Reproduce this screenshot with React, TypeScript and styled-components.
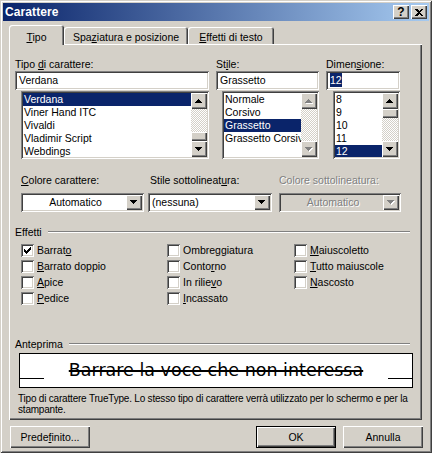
import styled, { createGlobalStyle, css } from 'styled-components';

const FACE = '#d4d0c8';
const NAVY = '#0a246a';

const raised = css`
  box-shadow: inset 1px 1px #fff, inset -1px -1px #404040, inset -2px -2px #808080;
`;

const sunken = css`
  box-shadow: inset 1px 1px #808080, inset -1px -1px #fff, inset 2px 2px #404040,
    inset -2px -2px ${FACE};
`;

const GlobalStyle = createGlobalStyle`
  html, body {
    margin: 0;
    padding: 0;
    background: ${FACE};
  }
  body {
    font-family: "Liberation Sans", Arial, sans-serif;
    font-size: 10.5px;
    color: #000;
  }
  * {
    box-sizing: border-box;
  }
`;

const fonts = ['Verdana', 'Viner Hand ITC', 'Vivaldi', 'Vladimir Script', 'Webdings'];
const styles = ['Normale', 'Corsivo', 'Grassetto', 'Grassetto Corsivo'];
const sizes = ['8', '9', '10', '11', '12'];

// label text, index of the access-key letter, checked
const effects: [string, number, boolean?][] = [
  ['Barrato', 6, true],
  ['Barrato doppio', 0],
  ['Apice', 0],
  ['Pedice', 0],
  ['Ombreggiatura', 5],
  ['Contorno', 5],
  ['In rilievo', 8],
  ['Incassato', 0],
  ['Maiuscoletto', 0],
  ['Tutto maiuscole', 0],
  ['Nascosto', 0],
];

const Arrow = ({ up, disabled }: { up?: boolean; disabled?: boolean }) => {
  const rows = up ? [1, 3, 5, 7] : [7, 5, 3, 1];
  const draw = (d: number, color: string) =>
    rows.map((w, i) => (
      <rect key={`${d}-${i}`} x={(7 - w) / 2 + d} y={i + d} width={w} height={1} fill={color} />
    ));
  return (
    <svg width={8} height={5} shapeRendering="crispEdges">
      {disabled && draw(1, '#fff')}
      {draw(0, disabled ? '#808080' : '#000')}
    </svg>
  );
};

// 7x7 pixel check mark
const checkPixels: [number, number, number][] = [
  [6, 0, 1],
  [5, 1, 2],
  [0, 2, 1],
  [4, 2, 3],
  [0, 3, 2],
  [3, 3, 3],
  [0, 4, 5],
  [1, 5, 3],
  [2, 6, 1],
];

const CheckMark = () => (
  <svg width={7} height={7} shapeRendering="crispEdges">
    {checkPixels.map(([x, y, w], i) => (
      <rect key={i} x={x} y={y} width={w} height={1} fill="#000" />
    ))}
  </svg>
);

const CloseGlyph = () => (
  <svg width={8} height={7} shapeRendering="crispEdges">
    <path d="M0 0h2l2 2 2-2h2L5 3.5 8 7H6L4 5 2 7H0l3-3.5z" fill="#000" />
  </svg>
);

const Scroll = ({ thumb, disabled }: { thumb?: number; disabled?: boolean }) => (
  <ScrollBar>
    <ScrollButton>
      <Arrow up disabled={disabled} />
    </ScrollButton>
    <Track>{thumb !== undefined && <Thumb style={{ marginTop: thumb }} />}</Track>
    <ScrollButton>
      <Arrow disabled={disabled} />
    </ScrollButton>
  </ScrollBar>
);

const Accel = ({ text, at }: { text: string; at: number }) => (
  <span>
    {text.slice(0, at)}
    <U>{text[at]}</U>
    {text.slice(at + 1)}
  </span>
);

const App = () => {
  return (
    <>
      <GlobalStyle />
      <Window>
        <TitleBar>
          <TitleText>Carattere</TitleText>
          <TitleButton $first>?</TitleButton>
          <TitleButton>
            <CloseGlyph />
          </TitleButton>
        </TitleBar>

        <Body>
          <TabStrip>
            <Tab $active $w={55}>
              <Accel text="Tipo" at={0} />
            </Tab>
            <Tab $w={124}>
              <Accel text="Spaziatura e posizione" at={3} />
            </Tab>
            <Tab $w={86}>
              <Accel text="Effetti di testo" at={0} />
            </Tab>
          </TabStrip>

          <Panel>
            <FontGrid>
              <Field>
                <Label>
                  <Accel text="Tipo di carattere:" at={5} />
                </Label>
                <TextBox>Verdana</TextBox>
                <ListBox $indent={6}>
                  <ListItems>
                    {fonts.map((f, i) => (
                      <ListRow key={f} $selected={i === 0}>
                        {f}
                      </ListRow>
                    ))}
                  </ListItems>
                  <Scroll thumb={23} />
                </ListBox>
              </Field>
              <Field>
                <Label>
                  <Accel text="Stile:" at={2} />
                </Label>
                <TextBox>Grassetto</TextBox>
                <ListBox $indent={6}>
                  <ListItems>
                    {styles.map((s, i) => (
                      <ListRow key={s} $selected={i === 2}>
                        {s}
                      </ListRow>
                    ))}
                  </ListItems>
                  <Scroll disabled />
                </ListBox>
              </Field>
              <Field>
                <Label>
                  <Accel text="Dimensione:" at={5} />
                </Label>
                <TextBox>
                  <Selection>12</Selection>
                </TextBox>
                <ListBox $indent={7}>
                  <ListItems>
                    {sizes.map((s, i) => (
                      <ListRow key={s} $selected={i === 4}>
                        {s}
                      </ListRow>
                    ))}
                  </ListItems>
                  <Scroll thumb={0} />
                </ListBox>
              </Field>
            </FontGrid>

            <ColorGrid>
              <Field>
                <Label>
                  <Accel text="Colore carattere:" at={0} />
                </Label>
                <ComboBox $w={123}>
                  <ComboText $center>Automatico</ComboText>
                  <DropButton>
                    <Arrow />
                  </DropButton>
                </ComboBox>
              </Field>
              <Field>
                <Label $shift={2}>
                  <Accel text="Stile sottolineatura:" at={17} />
                </Label>
                <ComboBox $w={124}>
                  <ComboText>(nessuna)</ComboText>
                  <DropButton>
                    <Arrow />
                  </DropButton>
                </ComboBox>
              </Field>
              <Field>
                <Label $disabled>Colore sottolineatura:</Label>
                <ComboBox $w={122} $disabled>
                  <ComboText $center $disabled>
                    Automatico
                  </ComboText>
                  <DropButton>
                    <Arrow disabled />
                  </DropButton>
                </ComboBox>
              </Field>
            </ColorGrid>

            <GroupHeader $top={14}>
              <span>Effetti</span>
              <GroupLine />
            </GroupHeader>
            <CheckGrid>
              {effects.map(([text, at, checked]) => (
                <CheckItem key={text}>
                  <CheckBox>{checked && <CheckMark />}</CheckBox>
                  <Accel text={text} at={at} />
                </CheckItem>
              ))}
            </CheckGrid>

            <GroupHeader $top={32}>
              <span>Anteprima</span>
              <GroupLine />
            </GroupHeader>
            <Preview>
              <PreviewRule />
              <PreviewText>Barrare la voce che non interessa</PreviewText>
              <PreviewRule />
            </Preview>
            <Description>
              Tipo di carattere TrueType. Lo stesso tipo di carattere verrà utilizzato per lo
              schermo e per la stampante.
            </Description>
          </Panel>

          <ButtonRow>
            <PushButton>
              <Accel text="Predefinito..." at={5} />
            </PushButton>
            <Spacer />
            <PushButton $default>OK</PushButton>
            <PushButton>Annulla</PushButton>
          </ButtonRow>
        </Body>
      </Window>
    </>
  );
};

export default App;

// Styled components

const U = styled.span`
  text-decoration: underline;
  text-underline-offset: 1px;
`;

const Window = styled.div`
  width: 432px;
  height: 453px;
  padding: 3px;
  display: flex;
  flex-direction: column;
  background: ${FACE};
  box-shadow: inset 1px 1px ${FACE}, inset -1px -1px #404040, inset 2px 2px #fff,
    inset -2px -2px #808080;
`;

const TitleBar = styled.div`
  height: 18px;
  display: flex;
  align-items: center;
  padding: 0 2px;
  background: linear-gradient(to right, ${NAVY}, #a6caf0);
  color: #fff;
`;

const TitleText = styled.div`
  font-weight: bold;
  font-size: 12px;
  letter-spacing: 0.1px;
`;

const TitleButton = styled.div<{ $first?: boolean }>`
  width: 16px;
  height: 14px;
  margin-left: ${({ $first }) => ($first ? 'auto' : '2px')};
  display: flex;
  align-items: center;
  justify-content: center;
  background: ${FACE};
  color: #000;
  font-weight: bold;
  font-size: 12px;
  line-height: 14px;
  ${raised}
`;

const Body = styled.div`
  display: flex;
  flex-direction: column;
  padding: 0 7px 0 6px;
`;

const TabStrip = styled.div`
  display: flex;
  align-items: flex-end;
  height: 19px;
  margin-top: 4px;
`;

const Tab = styled.div<{ $active?: boolean; $w: number }>`
  position: relative;
  z-index: ${({ $active }) => ($active ? 1 : 0)};
  width: ${({ $w }) => $w}px;
  height: ${({ $active }) => ($active ? 20 : 17)}px;
  margin-bottom: ${({ $active }) => ($active ? -1 : 0)}px;
  padding-top: ${({ $active }) => ($active ? 6 : 4)}px;
  text-align: center;
  line-height: 12px;
  white-space: nowrap;
  background: ${FACE};
  border-radius: 3px 3px 0 0;
  box-shadow: inset 1px 1px #fff, inset -1px 0 #404040, inset -2px 0 #808080;
`;

const Panel = styled.div`
  height: 376px;
  padding: 14px 12px 0 6px;
  display: flex;
  flex-direction: column;
  box-shadow: inset 1px 1px #fff, inset -1px -1px #404040, inset -2px -2px #808080;
`;

const FontGrid = styled.div`
  display: grid;
  grid-template-columns: 194px 103px 74px;
  column-gap: 7px;
`;

const Field = styled.div`
  display: flex;
  flex-direction: column;
`;

const Label = styled.div<{ $disabled?: boolean; $shift?: number }>`
  height: 12px;
  line-height: 12px;
  margin-bottom: 1px;
  margin-left: ${({ $shift }) => $shift ?? 0}px;
  white-space: nowrap;
  color: ${({ $disabled }) => ($disabled ? '#808080' : '#000')};
  text-shadow: ${({ $disabled }) => ($disabled ? '1px 1px #fff' : 'none')};
`;

const TextBox = styled.div`
  height: 19px;
  padding: 0 4px;
  line-height: 19px;
  background: #fff;
  white-space: nowrap;
  ${sunken}
`;

const Selection = styled.span`
  background: ${NAVY};
  color: #fff;
  padding: 1px 0;
`;

const ListBox = styled.div<{ $indent: number }>`
  height: 68px;
  margin: 1px 0 0 ${({ $indent }) => $indent}px;
  padding: 2px;
  display: flex;
  background: #fff;
  ${sunken}
`;

const ListItems = styled.div`
  flex: 1;
  min-width: 0;
  overflow: hidden;
`;

const ListRow = styled.div<{ $selected?: boolean }>`
  height: 13px;
  line-height: 13px;
  padding-left: 1px;
  white-space: nowrap;
  overflow: hidden;
  background: ${({ $selected }) => ($selected ? NAVY : 'transparent')};
  color: ${({ $selected }) => ($selected ? '#fff' : '#000')};
`;

const ScrollBar = styled.div`
  width: 16px;
  display: flex;
  flex-direction: column;
`;

const ScrollButton = styled.div`
  height: 16px;
  display: flex;
  align-items: center;
  justify-content: center;
  background: ${FACE};
  ${raised}
`;

const Track = styled.div`
  flex: 1;
  background: repeating-conic-gradient(${FACE} 0% 25%, #fff 0% 50%) 0 0 / 2px 2px;
`;

const Thumb = styled.div`
  height: 9px;
  background: ${FACE};
  ${raised}
`;

const ColorGrid = styled.div`
  display: grid;
  grid-template-columns: 127px 131px 1fr;
  margin: 15px 0 0 6px;
`;

const ComboBox = styled.div<{ $w: number; $disabled?: boolean }>`
  width: ${({ $w }) => $w}px;
  height: 19px;
  margin-top: 6px;
  padding: 2px;
  display: flex;
  background: ${({ $disabled }) => ($disabled ? FACE : '#fff')};
  ${sunken}
`;

const ComboText = styled.div<{ $center?: boolean; $disabled?: boolean }>`
  flex: 1;
  line-height: 15px;
  padding-left: 2px;
  white-space: nowrap;
  text-align: ${({ $center }) => ($center ? 'center' : 'left')};
  color: ${({ $disabled }) => ($disabled ? '#808080' : '#000')};
  text-shadow: ${({ $disabled }) => ($disabled ? '1px 1px #fff' : 'none')};
`;

const DropButton = styled.div`
  width: 16px;
  height: 15px;
  display: flex;
  align-items: center;
  justify-content: center;
  background: ${FACE};
  ${raised}
`;

const GroupHeader = styled.div<{ $top: number }>`
  display: flex;
  align-items: center;
  height: 12px;
  line-height: 12px;
  margin-top: ${({ $top }) => $top}px;
`;

const GroupLine = styled.div`
  flex: 1;
  height: 2px;
  margin-left: 6px;
  border-top: 1px solid #808080;
  border-bottom: 1px solid #fff;
`;

const CheckGrid = styled.div`
  display: grid;
  grid-template-columns: 146px 127px 1fr;
  grid-template-rows: repeat(4, 16px);
  grid-auto-flow: column;
  margin: 4px 0 0 6px;
`;

const CheckItem = styled.div`
  display: flex;
  align-items: center;
  gap: 3px;
  white-space: nowrap;
`;

const CheckBox = styled.div`
  width: 13px;
  height: 13px;
  display: flex;
  align-items: center;
  justify-content: center;
  background: #fff;
  ${sunken}
`;

const Preview = styled.div`
  width: 394px;
  height: 35px;
  margin: 3px 0 0 4px;
  padding-top: 6px;
  display: flex;
  align-items: flex-start;
  background: #fff;
  border: 1px solid #000;
`;

const PreviewRule = styled.div`
  width: 24px;
  height: 19px;
  border-bottom: 1px solid #000;
`;

const PreviewText = styled.div`
  flex: 1;
  text-align: center;
  font-family: "DejaVu Sans", Verdana, sans-serif;
  font-size: 17.5px;
  line-height: 20px;
  white-space: nowrap;
  text-decoration: line-through;
  text-decoration-thickness: 2px;
`;

const Description = styled.div`
  margin: 5px 0 0 3px;
  font-size: 10px;
  line-height: 11px;
  letter-spacing: -0.2px;
`;

const ButtonRow = styled.div`
  display: flex;
  gap: 7px;
  margin: 6px -1px 0 1px;
`;

const Spacer = styled.div`
  flex: 1;
`;

const PushButton = styled.div<{ $default?: boolean }>`
  width: 80px;
  height: 22px;
  display: flex;
  align-items: center;
  justify-content: center;
  background: ${FACE};
  white-space: nowrap;
  ${({ $default }) =>
    $default
      ? css`
          box-shadow: inset 0 0 0 1px #000, inset 2px 2px #fff, inset -2px -2px #404040,
            inset -3px -3px #808080;
        `
      : raised}
`;
